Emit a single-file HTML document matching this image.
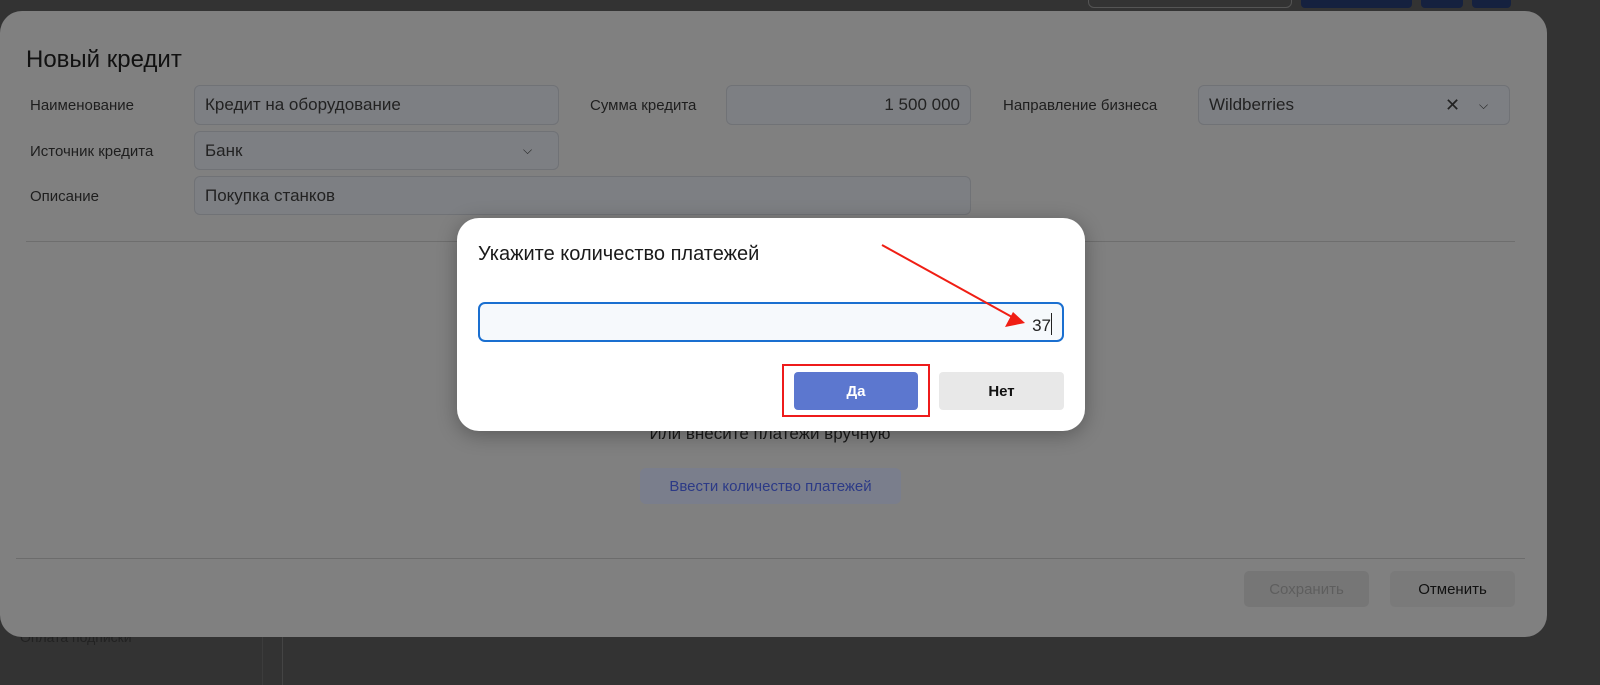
<!DOCTYPE html>
<html><head><meta charset="utf-8"><style>
*{box-sizing:border-box;margin:0;padding:0}
body{width:1600px;height:685px;background:#333333;font-family:"Liberation Sans",sans-serif;position:relative;overflow:hidden;color:#1c1c1c}
.a{position:absolute}
.modal{left:0;top:11px;width:1547px;height:626px;background:#808080;border-radius:22px}
.lbl{font-size:15px;color:#1e1e1e}
.inp{position:absolute;background:#7d7f83;border:1px solid #707276;border-radius:6px;font-size:17px;color:#222;padding:0 10px;display:flex;align-items:center}
.dlg{left:457px;top:218px;width:628px;height:213px;background:#fff;border-radius:22px;box-shadow:0 4px 20px rgba(0,0,0,.3)}
</style></head><body>
<div class="a" style="left:1088px;top:-10px;width:204px;height:18px;border:1px solid #555;border-radius:6px"></div>
<div class="a" style="left:1301px;top:0;width:111px;height:8px;background:#15213f;border-radius:0 0 4px 4px"></div>
<div class="a" style="left:1421px;top:0;width:42px;height:8px;background:#15213f;border-radius:0 0 4px 4px"></div>
<div class="a" style="left:1472px;top:0;width:39px;height:8px;background:#15213f;border-radius:0 0 4px 4px"></div>
<div class="a" style="left:262px;top:637px;width:1px;height:48px;background:#3c3c3c"></div>
<div class="a" style="left:282px;top:637px;width:1px;height:48px;background:#444"></div>
<div class="a" style="left:20px;top:629px;font-size:14px;color:#222">Оплата подписки</div>

<div class="a modal"></div>
<div class="a" style="left:26px;top:46px;font-size:24px;color:#111">Новый кредит</div>
<div class="a lbl" style="left:30px;top:97px">Наименование</div>
<div class="inp" style="left:194px;top:85px;width:365px;height:40px">Кредит на оборудование</div>
<div class="a lbl" style="left:590px;top:97px">Сумма кредита</div>
<div class="inp" style="left:726px;top:85px;width:245px;height:40px;justify-content:flex-end">1 500 000</div>
<div class="a lbl" style="left:1003px;top:97px">Направление бизнеса</div>
<div class="inp" style="left:1198px;top:85px;width:312px;height:40px">Wildberries<span style="position:absolute;left:246px;font-size:18px">✕</span><span style="position:absolute;left:280px;font-size:12px">⌵</span></div>
<div class="a lbl" style="left:30px;top:143px">Источник кредита</div>
<div class="inp" style="left:194px;top:131px;width:365px;height:39px">Банк<span style="position:absolute;left:328px;font-size:12px">⌵</span></div>
<div class="a lbl" style="left:30px;top:188px">Описание</div>
<div class="inp" style="left:194px;top:176px;width:777px;height:39px">Покупка станков</div>
<div class="a" style="left:26px;top:241px;width:1489px;height:1px;background:#6e6e6e"></div>
<div class="a" style="left:0;top:424px;width:1540px;text-align:center;font-size:17px;color:#1a1a1a">Или внесите платежи вручную</div>
<div class="a" style="left:640px;top:468px;width:261px;height:36px;background:#7a7e8c;border-radius:6px;color:#2c3a86;font-size:15px;display:flex;align-items:center;justify-content:center">Ввести количество платежей</div>
<div class="a" style="left:16px;top:558px;width:1509px;height:1px;background:#6c6c6c"></div>
<div class="a" style="left:1244px;top:571px;width:125px;height:36px;background:#767676;border-radius:5px;color:#5e5e5e;font-size:15px;display:flex;align-items:center;justify-content:center">Сохранить</div>
<div class="a" style="left:1390px;top:571px;width:125px;height:36px;background:#7a7a7a;border-radius:5px;color:#111;font-size:15px;display:flex;align-items:center;justify-content:center">Отменить</div>

<div class="a dlg"></div>
<div class="a" style="left:478px;top:243px;font-size:20px;color:#1a1a1a">Укажите количество платежей</div>
<div class="a" style="left:478px;top:302px;width:586px;height:40px;border:2px solid #1a6fd0;border-radius:7px;background:#f6f9fc;font-size:17px;text-align:right;padding:9px 10px 0 0;color:#222">37<span style="display:inline-block;width:1px;height:22px;background:#222;vertical-align:-4px"></span></div>
<div class="a" style="left:782px;top:364px;width:148px;height:53px;border:2px solid #ee1b1b"></div>
<div class="a" style="left:794px;top:372px;width:124px;height:38px;background:#5c77cf;border-radius:4px;color:#fff;font-size:15px;font-weight:bold;display:flex;align-items:center;justify-content:center">Да</div>
<div class="a" style="left:939px;top:372px;width:125px;height:38px;background:#e8e8e8;border-radius:4px;color:#111;font-size:15px;font-weight:bold;display:flex;align-items:center;justify-content:center">Нет</div>
<svg class="a" style="left:0;top:0" width="1600" height="685"><line x1="882" y1="245" x2="1012" y2="317" stroke="#f01e14" stroke-width="2"/><polygon points="1025,323 1005,327 1013,312" fill="#f01e14"/></svg>
</body></html>
